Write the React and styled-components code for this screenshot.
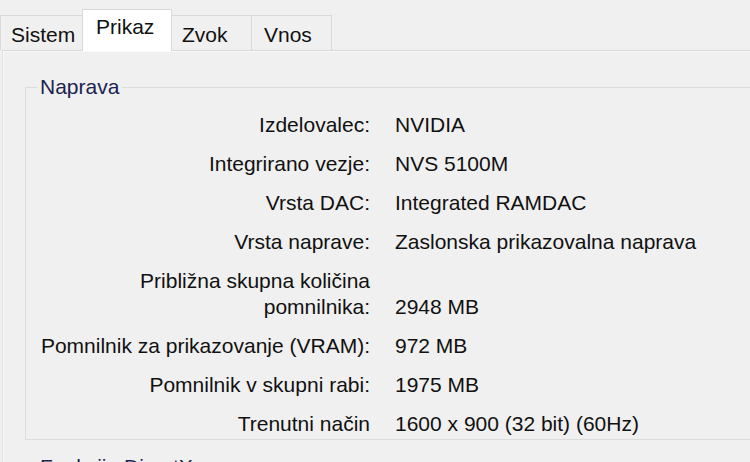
import React from 'react';
import styled, { createGlobalStyle } from 'styled-components';

const Global = createGlobalStyle`
  html, body { margin: 0; padding: 0; background: #f0f0f0; }
  body {
    font-family: "Liberation Sans", Arial, sans-serif;
    font-size: 21px;
    line-height: 26px;
    color: #111;
  }
`;

const Window = styled.div`
  width: 750px;
  height: 462px;
  overflow: hidden;
  background: #f0f0f0;
`;

const TabStrip = styled.div`
  display: flex;
  align-items: flex-end;
  height: 50px;
`;

const Tab = styled.div`
  box-sizing: border-box;
  width: ${p => p.$w}px;
  margin-left: -1px;
  padding-left: ${p => p.$pl}px;
  border: 1px solid #d9d9d9;
  border-bottom: none;
  white-space: nowrap;
  color: #111;
  height: ${p => (p.$active ? 42 : 35)}px;
  padding-top: ${p => (p.$active ? 3.5 : 6)}px;
  background: ${p => (p.$active ? '#ffffff' : '#f0f0f0')};
  margin-bottom: ${p => (p.$active ? -1 : 0)}px;
  position: relative;
  z-index: ${p => (p.$active ? 1 : 0)};
  &:first-child { margin-left: 0; }
`;

const Panel = styled.div`
  margin-left: 2px;
  border-top: 1px solid #d9d9d9;
  border-left: 1px solid #e0e0e0;
  box-shadow: inset 1px 1px 0 #fafafa;
  padding: 23px 0 0 22px;
  background: #f0f0f0;
`;

const GroupBox = styled.fieldset`
  box-sizing: border-box;
  width: 780px;
  margin: ${p => (p.$top ? `${p.$top}px` : '0')} 0 0 0;
  padding: 12px 0 2px 0;
  min-width: 0;
  border: 1px solid #dcdcdc;
`;

const Legend = styled.legend`
  margin-left: 11px;
  padding: 0 3px;
  color: #1b2450;
  line-height: 26px;
`;

const InfoGrid = styled.div`
  display: grid;
  grid-template-columns: 344px 1fr;
  column-gap: 25px;
  row-gap: 13px;
`;

const Label = styled.div`
  text-align: right;
  white-space: nowrap;
`;

const Value = styled.div`
  white-space: nowrap;
  align-self: end;
`;

const rows = [
  ['Izdelovalec:', 'NVIDIA'],
  ['Integrirano vezje:', 'NVS 5100M'],
  ['Vrsta DAC:', 'Integrated RAMDAC'],
  ['Vrsta naprave:', 'Zaslonska prikazovalna naprava'],
  [['Približna skupna količina', 'pomnilnika:'], '2948 MB'],
  ['Pomnilnik za prikazovanje (VRAM):', '972 MB'],
  ['Pomnilnik v skupni rabi:', '1975 MB'],
  ['Trenutni način', '1600 x 900 (32 bit) (60Hz)'],
];

const tabs = [
  { name: 'Sistem', w: 83, pl: 10 },
  { name: 'Prikaz', w: 90, pl: 13, active: true },
  { name: 'Zvok', w: 81, pl: 10 },
  { name: 'Vnos', w: 81, pl: 12 },
];

export default function App() {
  return (
    <Window>
      <Global />
      <TabStrip>
        {tabs.map(t => (
          <Tab key={t.name} $w={t.w} $pl={t.pl} $active={t.active}>
            {t.name}
          </Tab>
        ))}
      </TabStrip>
      <Panel>
        <GroupBox>
          <Legend>Naprava</Legend>
          <InfoGrid>
            {rows.map(([label, value], i) => (
              <React.Fragment key={i}>
                <Label>
                  {Array.isArray(label)
                    ? label.map((l, j) => (
                        <React.Fragment key={j}>
                          {j > 0 && <br />}
                          {l}
                        </React.Fragment>
                      ))
                    : label}
                </Label>
                <Value>{value}</Value>
              </React.Fragment>
            ))}
          </InfoGrid>
        </GroupBox>
        <GroupBox $top={14}>
          <Legend>Funkcije DirectX</Legend>
          <InfoGrid>
            <Label>Pospešitev za DirectDraw:</Label>
            <Value>Omogočeno</Value>
          </InfoGrid>
        </GroupBox>
      </Panel>
    </Window>
  );
}
